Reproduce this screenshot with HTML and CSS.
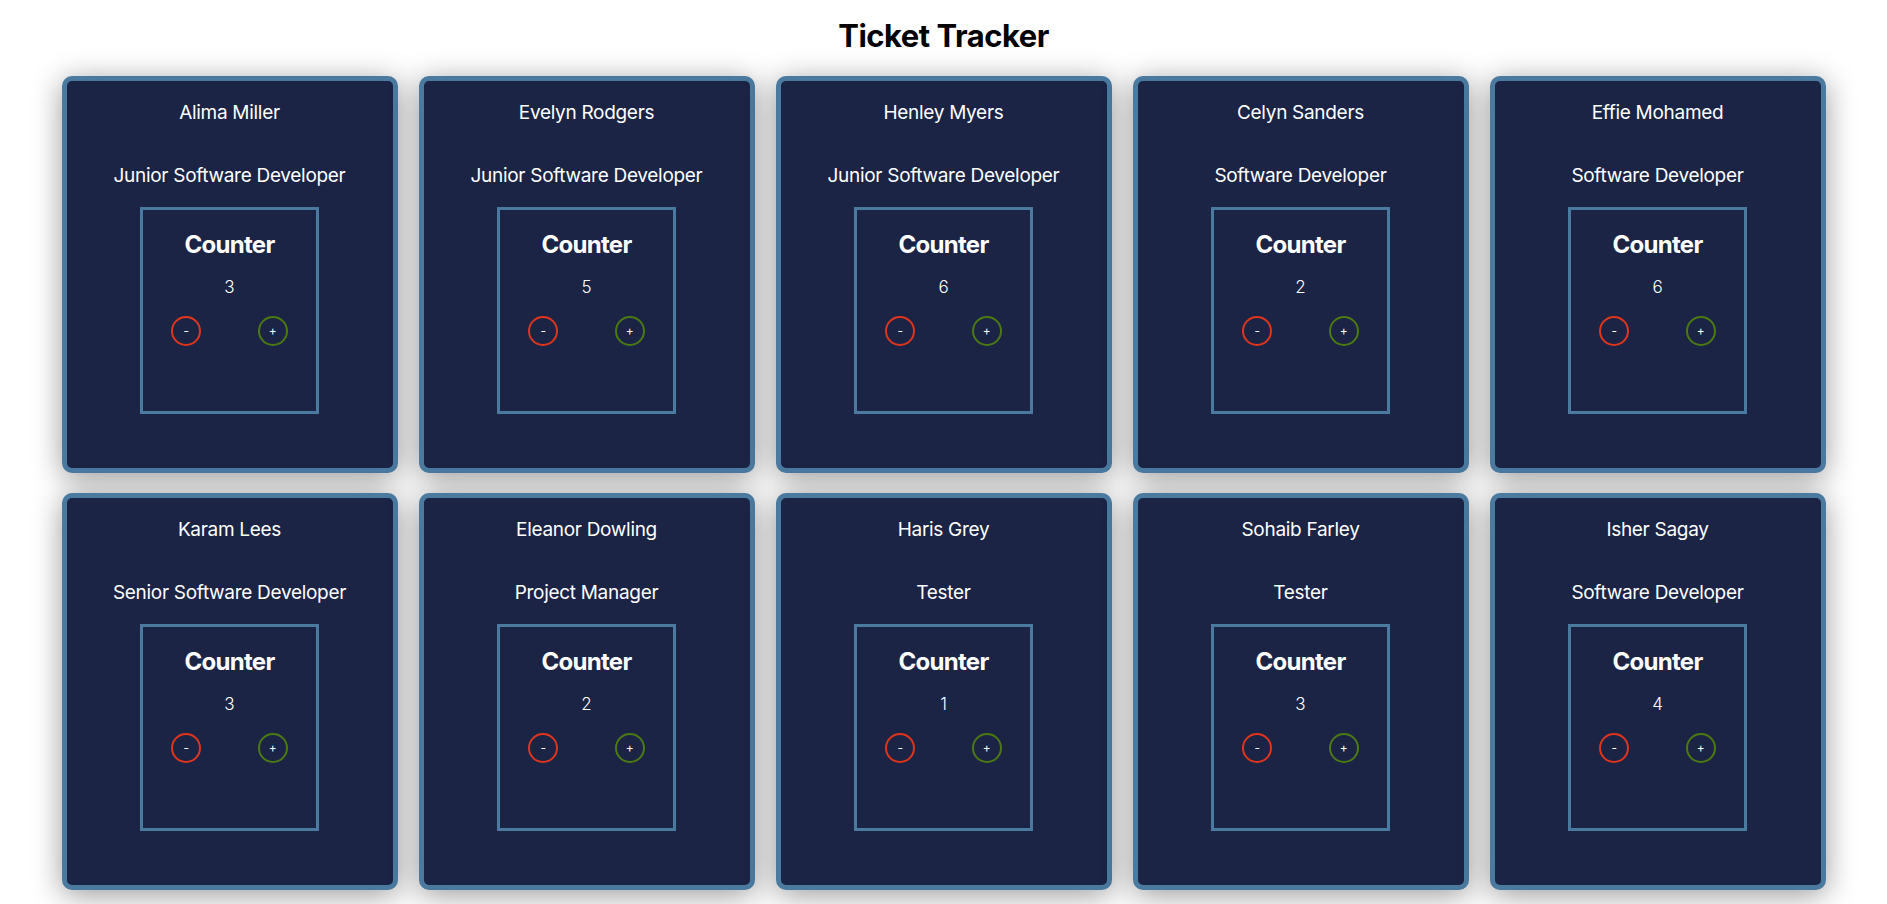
FILE: index.html
```html
<!DOCTYPE html>
<html lang="en">
<head>
    <meta charset="UTF-8">
    <meta name="viewport" content="width=device-width, initial-scale=1.0">
    <title>Ticket Tracker</title>
    <link rel="stylesheet" href="styles.css">
</head>
<body>
    <h1 class="title">Ticket Tracker</h1>

    <div class="board">
        <!-- Row 1 -->
        <div class="card">
            <p class="name">Alima Miller</p>
            <p class="role">Junior Software Developer</p>
            <div class="counter">
                <h2>Counter</h2>
                <p class="count">3</p>
                <div class="buttons">
                    <button class="btn minus" onclick="change(this, -1)">-</button>
                    <button class="btn plus" onclick="change(this, 1)">+</button>
                </div>
            </div>
        </div>
        <div class="card">
            <p class="name">Evelyn Rodgers</p>
            <p class="role">Junior Software Developer</p>
            <div class="counter">
                <h2>Counter</h2>
                <p class="count">5</p>
                <div class="buttons">
                    <button class="btn minus" onclick="change(this, -1)">-</button>
                    <button class="btn plus" onclick="change(this, 1)">+</button>
                </div>
            </div>
        </div>
        <div class="card">
            <p class="name">Henley Myers</p>
            <p class="role">Junior Software Developer</p>
            <div class="counter">
                <h2>Counter</h2>
                <p class="count">6</p>
                <div class="buttons">
                    <button class="btn minus" onclick="change(this, -1)">-</button>
                    <button class="btn plus" onclick="change(this, 1)">+</button>
                </div>
            </div>
        </div>
        <div class="card">
            <p class="name">Celyn Sanders</p>
            <p class="role">Software Developer</p>
            <div class="counter">
                <h2>Counter</h2>
                <p class="count">2</p>
                <div class="buttons">
                    <button class="btn minus" onclick="change(this, -1)">-</button>
                    <button class="btn plus" onclick="change(this, 1)">+</button>
                </div>
            </div>
        </div>
        <div class="card">
            <p class="name">Effie Mohamed</p>
            <p class="role">Software Developer</p>
            <div class="counter">
                <h2>Counter</h2>
                <p class="count">6</p>
                <div class="buttons">
                    <button class="btn minus" onclick="change(this, -1)">-</button>
                    <button class="btn plus" onclick="change(this, 1)">+</button>
                </div>
            </div>
        </div>

        <!-- Row 2 -->
        <div class="card">
            <p class="name">Karam Lees</p>
            <p class="role">Senior Software Developer</p>
            <div class="counter">
                <h2>Counter</h2>
                <p class="count">3</p>
                <div class="buttons">
                    <button class="btn minus" onclick="change(this, -1)">-</button>
                    <button class="btn plus" onclick="change(this, 1)">+</button>
                </div>
            </div>
        </div>
        <div class="card">
            <p class="name">Eleanor Dowling</p>
            <p class="role">Project Manager</p>
            <div class="counter">
                <h2>Counter</h2>
                <p class="count">2</p>
                <div class="buttons">
                    <button class="btn minus" onclick="change(this, -1)">-</button>
                    <button class="btn plus" onclick="change(this, 1)">+</button>
                </div>
            </div>
        </div>
        <div class="card">
            <p class="name">Haris Grey</p>
            <p class="role">Tester</p>
            <div class="counter">
                <h2>Counter</h2>
                <p class="count">1</p>
                <div class="buttons">
                    <button class="btn minus" onclick="change(this, -1)">-</button>
                    <button class="btn plus" onclick="change(this, 1)">+</button>
                </div>
            </div>
        </div>
        <div class="card">
            <p class="name">Sohaib Farley</p>
            <p class="role">Tester</p>
            <div class="counter">
                <h2>Counter</h2>
                <p class="count">3</p>
                <div class="buttons">
                    <button class="btn minus" onclick="change(this, -1)">-</button>
                    <button class="btn plus" onclick="change(this, 1)">+</button>
                </div>
            </div>
        </div>
        <div class="card">
            <p class="name">Isher Sagay</p>
            <p class="role">Software Developer</p>
            <div class="counter">
                <h2>Counter</h2>
                <p class="count">4</p>
                <div class="buttons">
                    <button class="btn minus" onclick="change(this, -1)">-</button>
                    <button class="btn plus" onclick="change(this, 1)">+</button>
                </div>
            </div>
        </div>
    </div>

    <script>
        // Update the ticket count of the card the button belongs to
        function change(button, step) {
            const count = button.closest('.counter').querySelector('.count');
            const value = parseInt(count.textContent, 10) + step;
            count.textContent = Math.max(0, value);
        }
    </script>
</body>
</html>
```

FILE: styles.css
```css
body {
    margin: 0;
    font-family: Inter, "Noto Sans", sans-serif;
    background-color: #ffffff;
    color: #000000;
}
.title {
    margin: 0;
    padding-top: 17px;
    font-size: 31px;
    line-height: 37px;
    font-weight: 700;
    letter-spacing: -0.5px;
    text-align: center;
}
.board {
    display: grid;
    grid-template-columns: repeat(5, 336px);
    column-gap: 21px;
    row-gap: 20px;
    justify-content: center;
    margin-top: 22px;
    padding-bottom: 14px;
}
.card {
    box-sizing: border-box;
    height: 397px;
    padding-top: 20px;
    display: flex;
    flex-direction: column;
    align-items: center;
    background-color: #1b2445;
    border: 5px solid #4a7aa0;
    border-radius: 10px;
    box-shadow: 0 5px 30px rgba(0, 0, 0, 0.4);
    color: #ffffff;
    text-align: center;
}
.name,
.role {
    margin: 0;
    font-size: 19px;
    line-height: 24px;
    letter-spacing: -0.3px;
}
.role {
    margin-top: 39px;
}
.counter {
    box-sizing: border-box;
    width: 179px;
    height: 207px;
    margin-top: 19px;
    padding-top: 20px;
    border: 3px solid #4a7aa0;
    display: flex;
    flex-direction: column;
    align-items: center;
}
.counter h2 {
    margin: 0;
    font-size: 24px;
    line-height: 29px;
    font-weight: 700;
    letter-spacing: -0.7px;
}
.count {
    margin: 18px 0 0;
    font-size: 17px;
    line-height: 21px;
    font-weight: 300;
}
.buttons {
    width: 100%;
    margin-top: 18px;
    display: flex;
    justify-content: space-around;
}
.btn {
    box-sizing: border-box;
    width: 30px;
    height: 30px;
    padding: 0;
    border-radius: 50%;
    background: transparent;
    color: #ffffff;
    font-family: Inter, sans-serif;
    font-size: 12px;
    line-height: 1;
    cursor: pointer;
}
.minus {
    border: 2px solid #e0351b;
}
.plus {
    border: 2px solid #4b7a12;
}
```
